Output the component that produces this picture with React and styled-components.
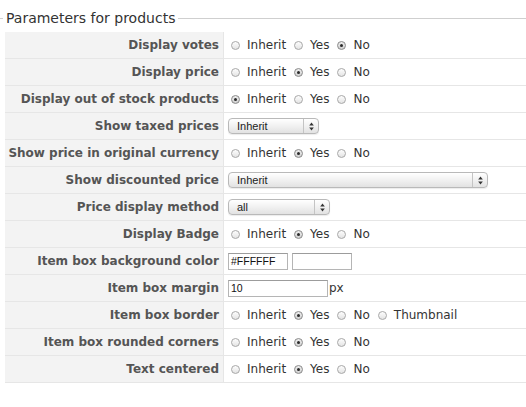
import React from "react";
import styled, { createGlobalStyle, css } from "styled-components";

const GlobalStyle = createGlobalStyle`
  html, body { margin: 0; padding: 0; background: #fff; }
  body { font-family: "DejaVu Sans", Verdana, sans-serif; color: #333; }
`;

const Fieldset = styled.fieldset`
  margin: 10px 0 0 0;
  padding: 0 0 0 5px;
  border: none;
  border-top: 1px solid #cfcfcf;
  min-width: 0;
`;

const Legend = styled.legend`
  padding: 0 3px;
  margin-left: -2px;
  font-size: 14px;
  line-height: 16px;
  color: #333;
`;

const Table = styled.div`
  margin-top: 6px;
  display: flex;
  flex-direction: column;
`;

const Row = styled.div`
  display: grid;
  grid-template-columns: 219px 1fr;
  height: 26px;
  border-bottom: 1px solid #e6e6e6;
`;

const Label = styled.div`
  background: #f3f3f3;
  border-right: 1px solid #e6e6e6;
  display: flex;
  align-items: center;
  justify-content: flex-end;
  padding-right: 4px;
  font-size: 12px;
  font-weight: bold;
  color: #555;
  white-space: nowrap;
`;

const Value = styled.div`
  display: flex;
  align-items: center;
  padding-left: 4px;
  font-size: 12px;
  color: #333;
  white-space: nowrap;
`;

const Option = styled.label`
  display: inline-flex;
  align-items: center;
  margin-right: 5px;
`;

const Radio = styled.span`
  position: relative;
  box-sizing: border-box;
  width: 9px;
  height: 9px;
  margin: 1px 7px 0 3px;
  border-radius: 50%;
  border: 1px solid #a8a8a8;
  background: linear-gradient(#fdfdfd, #e4e4e4);
  ${(p) =>
    p.$checked &&
    css`
      border-color: #8a8a8a;
      background: linear-gradient(#eeeeee, #cfcfcf);
      &::after {
        content: "";
        position: absolute;
        left: 2px;
        top: 2px;
        width: 3px;
        height: 3px;
        border-radius: 50%;
        background: #2b2b2b;
      }
    `}
`;

const Select = styled.div`
  box-sizing: border-box;
  width: ${(p) => p.$width}px;
  height: 16px;
  display: flex;
  align-items: stretch;
  border: 1px solid #b9b9b9;
  border-radius: 4px;
  background: linear-gradient(#ffffff, #f1f1f1 50%, #e2e2e2);
  box-shadow: 0 1px 1px rgba(0, 0, 0, 0.08);
  font-family: "Liberation Sans", Arial, sans-serif;
  font-size: 11px;
  color: #222;
`;

const SelectText = styled.span`
  flex: 1;
  padding-left: 8px;
  line-height: 14px;
`;

const SelectArrows = styled.span`
  width: 14px;
  border-left: 1px solid #c4c4c4;
  display: flex;
  align-items: center;
  justify-content: center;
`;

const TextInput = styled.span`
  box-sizing: border-box;
  width: ${(p) => p.$width}px;
  height: 17px;
  margin-right: ${(p) => p.$gap || 0}px;
  border: 1px solid #b5b5b5;
  border-top-color: #9c9c9c;
  background: #fff;
  padding-left: 2px;
  font-family: "Liberation Sans", Arial, sans-serif;
  font-size: 10.5px;
  line-height: 15px;
  color: #111;
`;

const Unit = styled.span`
  margin-left: 1px;
`;

const Arrows = () => (
  <svg width="5" height="9" viewBox="0 0 5 9">
    <path d="M2.5 0.5 L4.8 3.6 L0.2 3.6 Z" fill="#333" />
    <path d="M2.5 8.5 L4.8 5.4 L0.2 5.4 Z" fill="#333" />
  </svg>
);

const Radios = ({ options, checked }) => (
  <>
    {options.map((o) => (
      <Option key={o}>
        <Radio $checked={o === checked} />
        {o}
      </Option>
    ))}
  </>
);

const DropDown = ({ width, text }) => (
  <Select $width={width}>
    <SelectText>{text}</SelectText>
    <SelectArrows>
      <Arrows />
    </SelectArrows>
  </Select>
);

const YN = ["Inherit", "Yes", "No"];

const rows = [
  { label: "Display votes", render: () => <Radios options={YN} checked="No" /> },
  { label: "Display price", render: () => <Radios options={YN} checked="Yes" /> },
  { label: "Display out of stock products", render: () => <Radios options={YN} checked="Inherit" /> },
  { label: "Show taxed prices", render: () => <DropDown width={91} text="Inherit" /> },
  { label: "Show price in original currency", render: () => <Radios options={YN} checked="Yes" /> },
  { label: "Show discounted price", render: () => <DropDown width={260} text="Inherit" /> },
  { label: "Price display method", render: () => <DropDown width={102} text="all" /> },
  { label: "Display Badge", render: () => <Radios options={YN} checked="Yes" /> },
  {
    label: "Item box background color",
    render: () => (
      <>
        <TextInput $width={60} $gap={4}>#FFFFFF</TextInput>
        <TextInput $width={60} />
      </>
    ),
  },
  {
    label: "Item box margin",
    render: () => (
      <>
        <TextInput $width={100}>10</TextInput>
        <Unit>px</Unit>
      </>
    ),
  },
  {
    label: "Item box border",
    render: () => <Radios options={[...YN, "Thumbnail"]} checked="Yes" />,
  },
  { label: "Item box rounded corners", render: () => <Radios options={YN} checked="Yes" /> },
  { label: "Text centered", render: () => <Radios options={YN} checked="Yes" /> },
];

export default function App() {
  return (
    <>
      <GlobalStyle />
      <Fieldset>
        <Legend>Parameters for products</Legend>
        <Table>
          {rows.map((r) => (
            <Row key={r.label}>
              <Label>{r.label}</Label>
              <Value>{r.render()}</Value>
            </Row>
          ))}
        </Table>
      </Fieldset>
    </>
  );
}
